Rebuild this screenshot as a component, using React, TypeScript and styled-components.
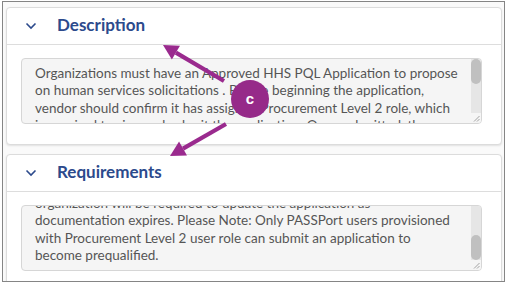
import { useLayoutEffect, useRef } from "react";
import styled, { createGlobalStyle } from "styled-components";

const fullText = [
  "Organizations must have an Approved HHS PQL Application to propose",
  "on human services solicitations . Before beginning the application,",
  "vendor should confirm it has assigned Procurement Level 2 role, which",
  "is required to sign and submit the application. Once submitted, the",
  "organization will be required to update the application as",
  "documentation expires. Please Note: Only PASSPort users provisioned",
  "with Procurement Level 2 user role can submit an application to",
  "become prequalified.",
].join("\n");

interface SectionProps {
  title: string;
  text: string;
  scrollToEnd?: boolean;
}

function Section({ title, text, scrollToEnd = false }: SectionProps) {
  const ref = useRef<HTMLTextAreaElement>(null);

  useLayoutEffect(() => {
    if (ref.current && scrollToEnd) {
      ref.current.scrollTop = ref.current.scrollHeight;
    }
  }, [scrollToEnd]);

  return (
    <Card>
      <CardHeader>
        <Chevron width="12" height="8" viewBox="0 0 12 8">
          <path d="M1.5 1.5 L6 6 L10.5 1.5" fill="none" stroke="#2c4a8c" strokeWidth="1.6" />
        </Chevron>
        <Title>{title}</Title>
      </CardHeader>
      <CardBody>
        <TextField>
          <TextBox ref={ref} readOnly value={text} />
          <ScrollColumn>
            <Track $atEnd={scrollToEnd}>
              <Thumb />
            </Track>
            <Grip width="10" height="10" viewBox="0 0 10 10">
              <path d="M3 8.5 L8.5 3 M6 8.5 L8.5 6" stroke="#9a9a9a" strokeWidth="0.9" />
            </Grip>
          </ScrollColumn>
        </TextField>
      </CardBody>
    </Card>
  );
}

function arrowHead(x1: number, y1: number, x2: number, y2: number, len = 15, half = 8) {
  const dx = x2 - x1;
  const dy = y2 - y1;
  const d = Math.hypot(dx, dy);
  const ux = dx / d;
  const uy = dy / d;
  const bx = x2 - ux * len;
  const by = y2 - uy * len;
  return {
    base: [bx, by],
    points: `${x2},${y2} ${bx - uy * half},${by + ux * half} ${bx + uy * half},${by - ux * half}`,
  };
}

function Arrow({ from, to }: { from: [number, number]; to: [number, number] }) {
  const head = arrowHead(from[0], from[1], to[0], to[1]);
  return (
    <g fill="#9a2a8e" stroke="#9a2a8e">
      <line x1={from[0]} y1={from[1]} x2={head.base[0]} y2={head.base[1]} strokeWidth="4.2" />
      <polygon points={head.points} stroke="none" />
    </g>
  );
}

export default function App() {
  return (
    <>
      <GlobalStyle />
      <Page>
        <Frame>
          <Section title="Description" text={fullText} />
          <Section title="Requirements" text={fullText} scrollToEnd />
        </Frame>
        <Overlay width="506" height="283">
          <Arrow from={[224, 81]} to={[163, 45]} />
          <Arrow from={[226, 124]} to={[170, 156]} />
        </Overlay>
        <Badge>c</Badge>
      </Page>
    </>
  );
}

const GlobalStyle = createGlobalStyle`
  body {
    margin: 0;
    background: #ffffff;
    font-family: Lato, "Open Sans", sans-serif;
  }
`;

const Page = styled.div`
  position: relative;
  width: 506px;
  height: 283px;
  padding: 1px 0 0 2px;
  box-sizing: border-box;
  overflow: hidden;
`;

const Frame = styled.div`
  width: 503px;
  height: 281px;
  box-sizing: border-box;
  border: 1px solid #858585;
  background: #fafafa;
  padding: 5px 2px 0 3px;
  display: flex;
  flex-direction: column;
  gap: 9px;
  overflow: hidden;
`;

const Card = styled.section`
  flex-shrink: 0;
  background: #ffffff;
  border: 1px solid #dcdcdc;
  border-radius: 4px;
  box-shadow: 0 1px 2px rgba(0, 0, 0, 0.1);
`;

const CardHeader = styled.div`
  height: 36px;
  display: flex;
  align-items: center;
  border-bottom: 1px solid #dddddd;
`;

const Chevron = styled.svg`
  margin: 0 0 0 18px;
`;

const Title = styled.h2`
  margin: 0 0 3px 20px;
  font-family: Lato, "Open Sans", sans-serif;
  font-size: 17px;
  font-weight: 700;
  color: #2c4a8c;
`;

const CardBody = styled.div`
  padding: 13px 19px 20px 14px;
`;

const TextField = styled.div`
  display: flex;
  width: 461px;
  height: 66px;
  box-sizing: border-box;
  border: 1px solid #d6d6d6;
  border-radius: 4px;
  background: #f5f5f5;
  overflow: hidden;
`;

const TextBox = styled.textarea`
  flex: 1;
  min-width: 0;
  margin: 0;
  padding: 6px 4px 6px 13px;
  border: none;
  background: transparent;
  color: #555555;
  font-family: Lato, "Open Sans", sans-serif;
  font-size: 13.5px;
  line-height: 17.3px;
  outline: none;
  overflow: hidden;
  resize: none;
  white-space: pre;
`;

const ScrollColumn = styled.div`
  width: 10px;
  display: flex;
  flex-direction: column;
`;

const Track = styled.div<{ $atEnd: boolean }>`
  flex: 1;
  display: flex;
  flex-direction: column;
  justify-content: ${({ $atEnd }) => ($atEnd ? "flex-end" : "flex-start")};
  background: #e6e6e6;
`;

const Thumb = styled.div`
  height: 25px;
  border-radius: 5px;
  background: #c0c0c0;
`;

const Grip = styled.svg`
  display: block;
  background: #f5f5f5;
`;

const Overlay = styled.svg`
  position: absolute;
  left: 0;
  top: 0;
  pointer-events: none;
`;

const Badge = styled.div`
  position: absolute;
  left: 231px;
  top: 80px;
  width: 38px;
  height: 38px;
  border-radius: 50%;
  background: #962a89;
  color: #ffffff;
  display: flex;
  align-items: center;
  justify-content: center;
  font-family: "Liberation Sans", Arial, sans-serif;
  font-size: 15px;
  font-weight: 700;
  line-height: 1;
  padding-bottom: 2px;
  box-sizing: border-box;
`;
